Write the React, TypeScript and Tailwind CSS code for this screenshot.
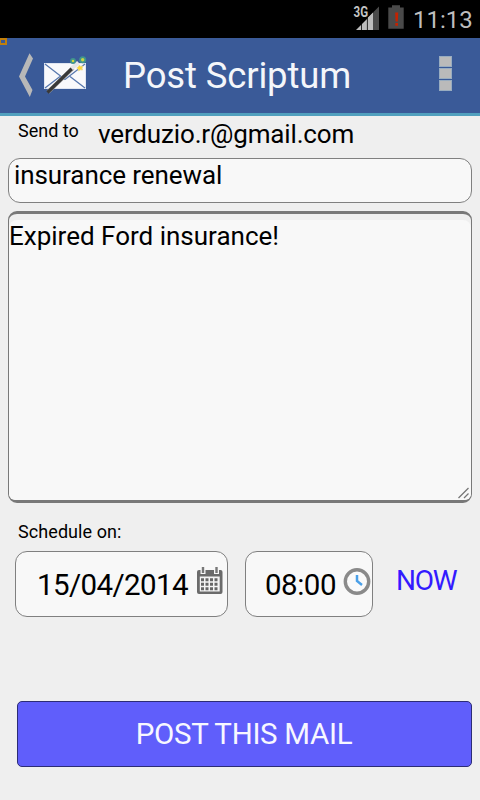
import React from 'react';

function MailWandIcon() {
  return (
    <svg className="block h-[44px] w-[46px] shrink-0" viewBox="0 0 46 44">
      <rect x="2.5" y="9.5" width="41" height="25" fill="#f9f9fb" stroke="#dfe5f1" strokeWidth="1" />
      <path d="M3 10 23 25.500 43 10M3 34 18 22.500M43 34 28 22.500" fill="none" stroke="#5878ae" strokeWidth="1.3" />
      <path d="M6 38 31 14" stroke="#a5a5a5" strokeWidth="4" />
      <path d="M5.500 38.500 30 14.500" stroke="#383838" strokeWidth="3.200" />
      <path d="m29.500 14.500 7-6" stroke="#e6e6e6" strokeWidth="4.200" />
      <circle cx="31" cy="7" r="2.100" fill="#d0d83c" stroke="#3f948e" strokeWidth="1.600" />
      <circle cx="40.700" cy="5.700" r="2.600" fill="#c8d444" stroke="#3f948e" strokeWidth="1.800" />
      <path d="m37.500 11 1 1.500 2.500-.5-1 2.200.5 1.800-2.300-.2-1.600 1.200-.4-2-1.500-1 1.500-1.200z" fill="#ffda35" stroke="#eadb94" strokeWidth=".8" />
    </svg>
  );
}

function StatusBar() {
  return (
    <div className="flex h-[38px] items-start bg-black pl-[353px]">
      <svg className="block h-[38px] w-[60px] shrink-0" viewBox="0 0 60 38">
        <path d="M3 30 20 13V30Z" fill="#bdbdbd" />
        <path d="M20 12.500 26 6.500V30H20Z" fill="#4a4a4a" />
        <path d="M14.500 18 20 12.500V30H14.500Z" fill="#bdbdbd" />
        <path d="M8.500 20V30M14.400 14V30" stroke="#000" strokeWidth="0.800" />
        <text x="0.500" y="17" fontFamily="Roboto, sans-serif" fontWeight="700" fontSize="14" textLength="14.500" lengthAdjust="spacingAndGlyphs" fill="#c4c4c4" stroke="#000" strokeWidth="0.800" paintOrder="stroke">3G</text>
        <path d="M35.300 7.500H39V5.300H47V7.500H50.700V28.700H35.300Z" fill="#4a4a4a" />
        <path d="M42.200 12.500H45.200L44.800 21.500H42.600ZM42.300 23H45V25.700H42.300Z" fill="#c52200" />
      </svg>
      <span className="whitespace-nowrap text-[24px] leading-[40px] text-[#bebebe]">11:13</span>
    </div>
  );
}

function Header() {
  return (
    <header className="relative flex h-[78px] items-start border-b-[3px] border-[#51a0be] bg-[#3a5a98]">
      <span className="absolute left-0 top-0 h-[7px] w-[7px] border-2 border-l border-[#c17f0b]" />
      <svg className="ml-[18px] mt-[14px] block h-[46px] w-[16px] shrink-0" viewBox="0 0 16 46">
        <path d="M11.500 1.300 15 6.500 7 24.500 14.500 38 11.800 45 1 24.500Z" fill="#b8b8b8" />
      </svg>
      <div className="ml-[8px] mt-[16px]"><MailWandIcon /></div>
      <h1 className="ml-[35px] mt-[17px] w-[240px] whitespace-nowrap pt-[1px] text-[36.500px] font-normal leading-[40px] tracking-[-0.150px] text-[#f4f6fa]">Post Scriptum</h1>
      <div className="ml-[76px] mt-[18px] flex flex-col gap-[1px]">
        <i className="h-[11px] w-[13px] border border-[#98acc0] bg-[#bababa]" />
        <i className="h-[11px] w-[13px] border border-[#98acc0] bg-[#bababa]" />
        <i className="h-[11px] w-[13px] border border-[#98acc0] bg-[#bababa]" />
      </div>
    </header>
  );
}

function CalendarIcon() {
  return (
    <svg className="block h-[28px] w-[26px] shrink-0" viewBox="0 0 26 28">
      <rect x="0" y="3" width="25.500" height="24" rx="2" fill="#6b6b6b" />
      <path d="M2.800 9.500H22.700V24.500H2.800Z" fill="#f4f4f4" />
      <path d="M3.500 1H8.500V7H3.500ZM17 1H22V7H17Z" fill="#f8f8f8" />
      <path d="M4.800 0H7.200V6H4.800ZM18.300 0H20.700V6H18.300Z" fill="#777" />
      <path d="M4 12.700H22M4 17.200H22M4 21.700H22" stroke="#666" strokeWidth="3" strokeDasharray="3 1.500" />
    </svg>
  );
}

function ClockIcon() {
  return (
    <svg className="block h-[28px] w-[28px] shrink-0" viewBox="0 0 28 28">
      <circle cx="14" cy="14.500" r="11.700" fill="#fafafa" stroke="#8a8a8a" strokeWidth="3.400" />
      <path d="M14 8V14L19 18" fill="none" stroke="#4ba0e8" strokeWidth="2.500" />
    </svg>
  );
}

export default function App() {
  return (
    <div className="h-[800px] w-[480px] overflow-hidden bg-[#efefef] font-['Roboto',sans-serif] text-black">
      <StatusBar />
      <Header />
      <main>
        <div className="flex h-[42px] items-start whitespace-nowrap">
          <label className="ml-[18px] mt-[-5px] w-[80px] text-[18px] leading-[40px]">Send to</label>
          <span className="mt-[-2px] text-[26px] leading-[40px] tracking-[-0.150px]">verduzio.r@gmail.com</span>
        </div>
        <div className="ml-[8px] h-[45px] w-[464px] rounded-[12px] border-[1.500px] border-[#808080] bg-[#f8f8f8] pl-[5px]">
          <div className="-mt-[4px] whitespace-nowrap text-[26px] leading-[40px] tracking-[-0.080px]">insurance renewal</div>
        </div>
        <div className="relative ml-[8px] mt-[8px] h-[292px] w-[464px] rounded-[9px] border-x-[1.500px] border-y-[3px] border-[#787878] bg-[#efefef] pt-[6px]">
          <div className="h-full rounded-t-[8px] rounded-b-[6px] bg-[#f8f8f8]">
            <div className="whitespace-nowrap text-[26px] leading-[32px]">Expired Ford insurance!</div>
          </div>
          <svg className="absolute bottom-0 right-0 h-[14px] w-[14px]" viewBox="0 0 14 14">
            <path d="M1.500 12 11.500 2M7 12 11.500 7.500" fill="none" stroke="#777" strokeWidth="1.300" />
          </svg>
        </div>
        <div className="ml-[18px] mt-[9px] h-[39px] whitespace-nowrap text-[18px] leading-[40px] tracking-[0.080px]">Schedule on:</div>
        <div className="flex items-start whitespace-nowrap">
          <div className="ml-[15px] flex h-[66px] w-[213px] items-start rounded-[12px] border border-[#808080] bg-[#f8f8f8] pl-[21px]">
            <span className="mt-[13px] w-[160px] text-[29.500px] leading-[40px] tracking-[-0.600px]">15/04/2014</span>
            <div className="mt-[15px]"><CalendarIcon /></div>
          </div>
          <div className="ml-[17px] flex h-[66px] w-[128px] items-start rounded-[12px] border border-[#808080] bg-[#f8f8f8] pl-[19px]">
            <span className="mt-[13px] w-[78px] text-[29.500px] leading-[40px] tracking-[-0.500px]">08:00</span>
            <div className="mt-[15px]"><ClockIcon /></div>
          </div>
          <span className="ml-[23px] mt-[10px] text-[28px] leading-[40px] tracking-[-1.200px] text-[#331aff]">NOW</span>
        </div>
        <button className="ml-[17px] mt-[84px] flex h-[66px] w-[455px] items-start justify-center whitespace-nowrap rounded-[5px] border border-[#2c2c75] bg-[#605efb] pr-[1px] pt-[12px] text-[29.500px] leading-[40px] tracking-[-0.300px] text-[#f7f7ff]">POST THIS MAIL</button>
      </main>
    </div>
  );
}
